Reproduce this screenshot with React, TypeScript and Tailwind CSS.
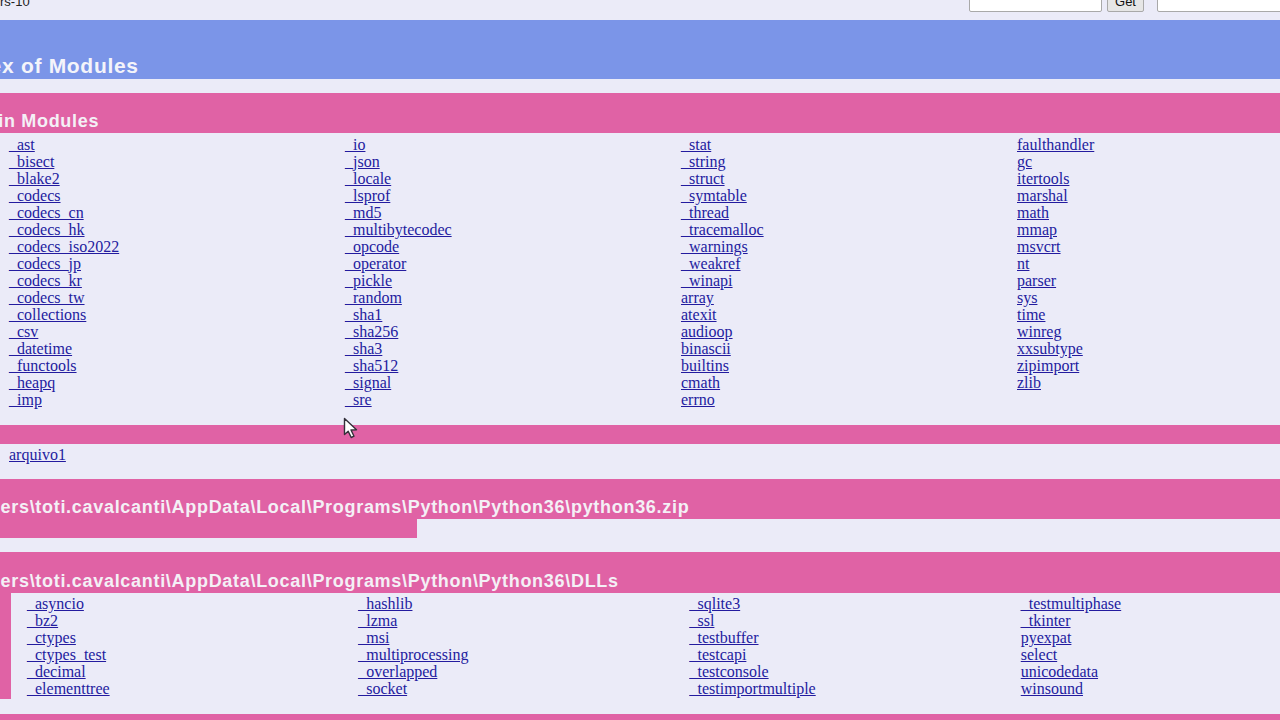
const builtin = [
  ['_ast', '_bisect', '_blake2', '_codecs', '_codecs_cn', '_codecs_hk', '_codecs_iso2022', '_codecs_jp', '_codecs_kr', '_codecs_tw', '_collections', '_csv', '_datetime', '_functools', '_heapq', '_imp'],
  ['_io', '_json', '_locale', '_lsprof', '_md5', '_multibytecodec', '_opcode', '_operator', '_pickle', '_random', '_sha1', '_sha256', '_sha3', '_sha512', '_signal', '_sre'],
  ['_stat', '_string', '_struct', '_symtable', '_thread', '_tracemalloc', '_warnings', '_weakref', '_winapi', 'array', 'atexit', 'audioop', 'binascii', 'builtins', 'cmath', 'errno'],
  ['faulthandler', 'gc', 'itertools', 'marshal', 'math', 'mmap', 'msvcrt', 'nt', 'parser', 'sys', 'time', 'winreg', 'xxsubtype', 'zipimport', 'zlib'],
];

const dlls = [
  ['_asyncio', '_bz2', '_ctypes', '_ctypes_test', '_decimal', '_elementtree'],
  ['_hashlib', '_lzma', '_msi', '_multiprocessing', '_overlapped', '_socket'],
  ['_sqlite3', '_ssl', '_testbuffer', '_testcapi', '_testconsole', '_testimportmultiple'],
  ['_testmultiphase', '_tkinter', 'pyexpat', 'select', 'unicodedata', 'winsound'],
];

const ModuleLink = ({ name }: { name: string }) => (
  <a href="#" className="block h-[17px] leading-[17px] text-[#231b9f] underline">
    {name}
  </a>
);

const Columns = ({ cols }: { cols: string[][] }) => (
  <div className="grid grid-cols-4">
    {cols.map((col, i) => (
      <div key={i}>
        {col.map((name) => (
          <ModuleLink key={name} name={name} />
        ))}
      </div>
    ))}
  </div>
);

const Heading = ({ text, className, h = 'h-[40px]' }: { text: string; className: string; h?: string }) => (
  <div className={`flex items-end overflow-hidden bg-[#e062a5] pb-[1px] font-['Liberation_Sans',Arial,sans-serif] text-[18px] leading-[21px] font-bold tracking-[0.7px] whitespace-nowrap text-[#f4f0f6] ${h}`}>
    <span className={className}>{text}</span>
  </div>
);

export default function App() {
  return (
    <div className="relative h-[720px] w-[1280px] overflow-hidden bg-[#ebebf8] font-['Liberation_Serif','Times_New_Roman',serif] text-[16px]">
      <div className="flex h-[20px] items-end justify-between overflow-hidden pb-[8px]">
        <div className="mb-[3px] font-['Liberation_Sans',Arial,sans-serif] text-[13px] leading-[15px] text-[#222]">rs-10</div>
        <div className="mr-[-40px] flex items-end">
          <div className="h-[24px] w-[133px] rounded-[2px] border border-[#a9a9a9] bg-white" />
          <div className="ml-[5px] flex h-[20px] w-[37px] items-center justify-center rounded-[2px] border border-[#a9a9a9] bg-[#e6e6e6] font-['Liberation_Sans',Arial,sans-serif] text-[13px] text-[#111]">Get</div>
          <div className="ml-[13px] h-[24px] w-[163px] rounded-[2px] border border-[#a9a9a9] bg-white" />
        </div>
      </div>

      <div className="flex h-[59px] items-end overflow-hidden bg-[#7b95e8] pb-[1px] font-['Liberation_Sans',Arial,sans-serif] text-[21px] leading-[24px] font-bold tracking-[0.7px] whitespace-nowrap text-[#f4f4fa]">
        <span className="ml-[-44px]">Index of Modules</span>
      </div>

      <div className="mt-[14px]">
        <Heading text="Built-in Modules" className="ml-[-52px]" />
      </div>
      <div className="w-[1353px] pt-[3px] pl-[9px]">
        <Columns cols={builtin} />
      </div>

      <div className="mt-[17px] h-[19px] bg-[#e062a5]" />
      <div className="h-[35px] pt-[2px] pl-[9px]">
        <ModuleLink name="arquivo1" />
      </div>

      <Heading text="C:\Users\toti.cavalcanti\AppData\Local\Programs\Python\Python36\python36.zip" className="ml-[-50px]" />
      <div className="h-[19px] w-[417px] bg-[#e062a5]" />

      <div className="mt-[14px]">
        <Heading text="C:\Users\toti.cavalcanti\AppData\Local\Programs\Python\Python36\DLLs" className="ml-[-50px]" h="h-[41px]" />
      </div>
      <div className="flex">
        <div className="h-[106px] w-[11px] shrink-0 bg-[#e062a5]" />
        <div className="w-[1341px] shrink-0 pt-[2px] pl-[16px]">
          <Columns cols={dlls} />
        </div>
      </div>
      <div className="mt-[15px] h-[10px] bg-[#e062a5]" />

      <svg className="absolute top-[417px] left-[343px]" width="17" height="22" viewBox="0 0 17 22">
        <path d="M1.5 1.5 L1.5 17.5 L5.2 14.2 L8.2 20.5 L11 19.2 L8 13 L13.5 12.8 Z" fill="#fff" stroke="#33303a" strokeWidth="1.4" strokeLinejoin="round" />
      </svg>
    </div>
  );
}
